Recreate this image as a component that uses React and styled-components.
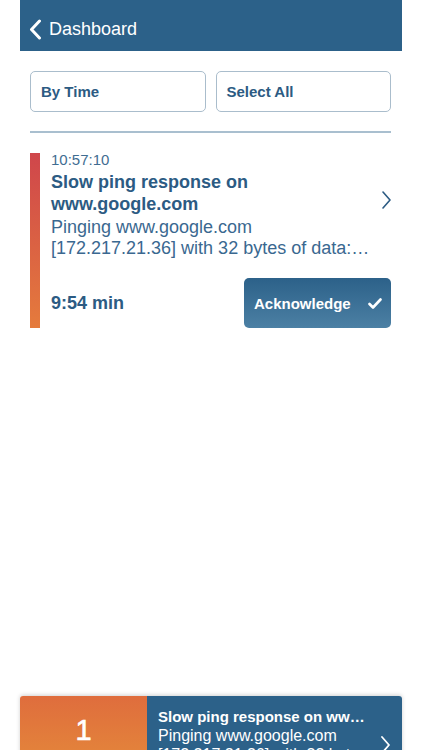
import React from "react";
import styled, { createGlobalStyle } from "styled-components";

const GlobalStyle = createGlobalStyle`
  html, body {
    margin: 0;
    padding: 0;
    height: 750px;
    overflow: hidden;
    background: #fff;
    font-family: "Liberation Sans", Arial, sans-serif;
  }
`;

const Screen = styled.div`
  width: 382px;
  height: 776px;
  margin-left: 20px;
  display: flex;
  flex-direction: column;
  background: #fff;
`;

const Header = styled.header`
  height: 51px;
  box-sizing: border-box;
  flex-shrink: 0;
  background: #2c6189;
  display: flex;
  align-items: center;
  padding: 7px 0 0 9px;
  gap: 7px;
  color: #fff;
  font-size: 18px;
`;

const Main = styled.main`
  flex: 1;
  padding: 20px 11px 0 10px;
  display: flex;
  flex-direction: column;
`;

const FilterRow = styled.div`
  display: grid;
  grid-template-columns: 1fr 1fr;
  gap: 10px;
`;

const FilterButton = styled.button`
  height: 41px;
  border: 1px solid #aabdcc;
  border-radius: 5px;
  background: #fff;
  text-align: left;
  padding: 0 10px;
  font-family: inherit;
  font-weight: bold;
  font-size: 15px;
  color: #2c5b83;
`;

const Divider = styled.hr`
  margin: 19px 0 0;
  border: none;
  height: 2px;
  background: #a9bfcf;
`;

const Card = styled.div`
  margin-top: 20px;
  display: flex;
  gap: 11px;
`;

const SeverityBar = styled.div`
  width: 10px;
  flex-shrink: 0;
  background: linear-gradient(to bottom, #cf464b, #e57b3c);
`;

const CardBody = styled.div`
  flex: 1;
  display: flex;
  flex-direction: column;
  min-width: 0;
`;

const CardTop = styled.div`
  display: flex;
  align-items: center;
`;

const CardText = styled.div`
  flex: 1;
  min-width: 0;
  color: #2c5b83;
`;

const CardChevron = styled.div`
  display: flex;
  padding-bottom: 12px;
`;

const Time = styled.div`
  font-size: 15px;
  line-height: 15px;
  margin-top: -1px;
  color: #3f6d92;
`;

const Title = styled.div`
  font-weight: bold;
  font-size: 18px;
  line-height: 22px;
  margin-top: 4px;
`;

const Description = styled.div`
  font-size: 18px;
  line-height: 21px;
  margin-top: 2px;
  color: #3a6890;
  display: -webkit-box;
  -webkit-line-clamp: ${(p) => p.lines};
  -webkit-box-orient: vertical;
  overflow: hidden;
`;

const CardFooter = styled.div`
  margin-top: auto;
  display: flex;
  align-items: center;
  justify-content: space-between;
  padding-top: 19px;
`;

const Duration = styled.div`
  font-weight: bold;
  font-size: 18px;
  color: #2c5b83;
`;

const AckButton = styled.button`
  width: 147px;
  height: 50px;
  border: none;
  border-radius: 5px;
  background: linear-gradient(to bottom, #2c6189, #4c80a4);
  color: #fff;
  font-family: inherit;
  font-size: 15px;
  font-weight: bold;
  display: flex;
  align-items: center;
  justify-content: space-between;
  padding: 0 9px 0 10px;
`;

const Footer = styled.footer`
  height: 80px;
  flex-shrink: 0;
  display: flex;
  box-shadow: 0 -1px 4px rgba(0, 0, 0, 0.18);
  border-radius: 3px 3px 0 0;
  overflow: hidden;
`;

const CountBox = styled.div`
  width: 127px;
  flex-shrink: 0;
  background: linear-gradient(to bottom, #df6d3d, #e58b3a);
  color: #fff;
  font-size: 29px;
  -webkit-text-stroke: 0.6px #fff;
  display: flex;
  justify-content: center;
  padding-top: 18px;
  box-sizing: border-box;
`;

const FooterInfo = styled.div`
  flex: 1;
  min-width: 0;
  background: #2c6189;
  display: flex;
  padding: 12px 0 0 11px;
  color: #fff;
`;

const FooterText = styled.div`
  flex: 1;
  min-width: 0;
`;

const FooterTitle = styled.div`
  font-weight: bold;
  font-size: 15px;
  line-height: 18px;
  white-space: nowrap;
  overflow: hidden;
  text-overflow: ellipsis;
`;

const FooterDesc = styled.div`
  font-size: 16px;
  line-height: 19px;
`;

const FooterChevron = styled.div`
  width: 34px;
  flex-shrink: 0;
  display: flex;
  justify-content: center;
  padding-top: 28px;
`;

const Chevron = ({ color = "#2c5b83", w = 8, h = 16, sw = 1.6 }) => (
  <svg width={w} height={h} viewBox={`0 0 ${w} ${h}`}>
    <polyline
      points={`1,1 ${w - 1},${h / 2} 1,${h - 1}`}
      fill="none"
      stroke={color}
      strokeWidth={sw}
      strokeLinecap="round"
      strokeLinejoin="round"
    />
  </svg>
);

const BackChevron = () => (
  <svg width="13" height="21" viewBox="0 0 13 21">
    <polyline
      points="10.5,2 2.5,10.5 10.5,19"
      fill="none"
      stroke="#fff"
      strokeWidth="3"
      strokeLinecap="round"
      strokeLinejoin="round"
    />
  </svg>
);

const Check = () => (
  <svg width="14" height="11" viewBox="0 0 14 11">
    <polyline
      points="1.5,6 5,9.5 12.5,1.5"
      fill="none"
      stroke="#fff"
      strokeWidth="2.6"
      strokeLinecap="round"
      strokeLinejoin="round"
    />
  </svg>
);

export default function App() {
  return (
    <>
      <GlobalStyle />
      <Screen>
        <Header>
          <BackChevron />
          <span>Dashboard</span>
        </Header>
        <Main>
          <FilterRow>
            <FilterButton>By Time</FilterButton>
            <FilterButton>Select All</FilterButton>
          </FilterRow>
          <Divider />
          <Card>
            <SeverityBar />
            <CardBody>
              <CardTop>
                <CardText>
                  <Time>10:57:10</Time>
                  <Title>
                    Slow ping response on
                    <br />
                    www.google.com
                  </Title>
                  <Description lines={2}>
                    Pinging www.google.com [172.217.21.36] with 32 bytes of data: Reply from 172.217.21.36
                  </Description>
                </CardText>
                <CardChevron>
                  <Chevron w={9} h={18} />
                </CardChevron>
              </CardTop>
              <CardFooter>
                <Duration>9:54 min</Duration>
                <AckButton>
                  <span>Acknowledge</span>
                  <Check />
                </AckButton>
              </CardFooter>
            </CardBody>
          </Card>
        </Main>
        <Footer>
          <CountBox>1</CountBox>
          <FooterInfo>
            <FooterText>
              <FooterTitle>Slow ping response on www.google.com</FooterTitle>
              <FooterDesc>
                Pinging www.google.com
                <br />
                [172.217.21.36] with 32 bytes
              </FooterDesc>
            </FooterText>
            <FooterChevron>
              <Chevron color="#fff" w={9} h={18} sw={1.8} />
            </FooterChevron>
          </FooterInfo>
        </Footer>
      </Screen>
    </>
  );
}
